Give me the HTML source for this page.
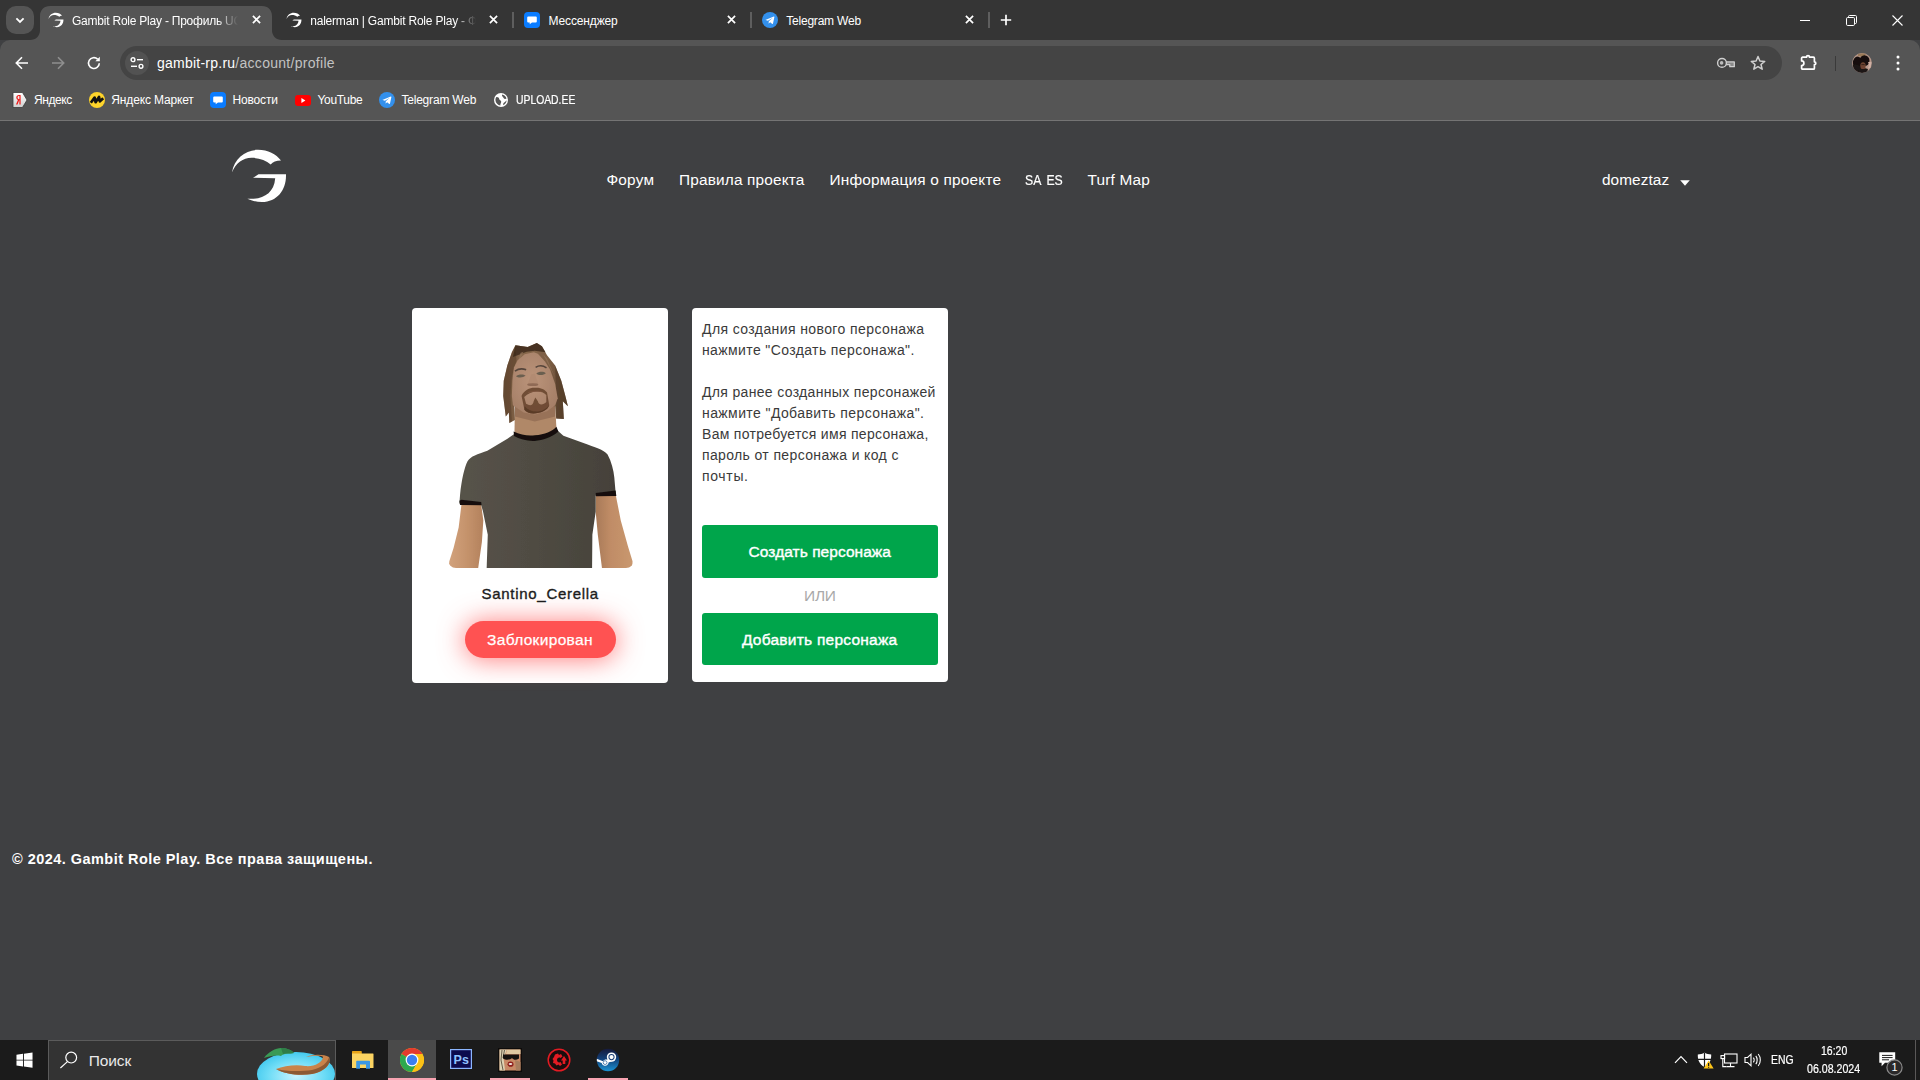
<!DOCTYPE html>
<html lang="ru"><head><meta charset="utf-8"><title>Gambit Role Play - Профиль UCP</title>
<style>
*{margin:0;padding:0;box-sizing:border-box}
html,body{width:1920px;height:1080px;overflow:hidden;background:#3f4042}
body{position:relative;font-family:"Liberation Sans",sans-serif;color:#fff}
.abs{position:absolute;display:block}
.t{position:absolute;white-space:nowrap;line-height:1;display:block}
#frame{position:absolute;left:0;top:0;width:1920px;height:40px;background:#353535}
#tabsearch{position:absolute;left:6px;top:6px;width:28px;height:28px;border-radius:10px;background:#555555}
#acttab{position:absolute;left:30px;top:6px}
#toolbar{position:absolute;left:0;top:40px;width:1920px;height:80px;background:#555555;border-radius:10px 10px 0 0}
#bmline{position:absolute;left:0;top:120px;width:1920px;height:1px;background:#747474}
#omni{position:absolute;left:120px;top:46px;width:1662px;height:34px;border-radius:17px;background:#444444}
#chip{position:absolute;left:125px;top:51px;width:24px;height:24px;border-radius:12px;background:#525252}
.tabtitle{position:absolute;top:12px;height:18px;overflow:hidden;white-space:nowrap;font-size:12px;line-height:18px;-webkit-mask-image:linear-gradient(to right,#000 0,#000 145px,transparent 166px);mask-image:linear-gradient(to right,#000 0,#000 145px,transparent 166px)}
.tsep{position:absolute;top:12px;width:1.5px;height:16px;background:#5e5e5e}
#page{position:absolute;left:0;top:121px;width:1920px;height:919px;background:#3f4042}
#card1{position:absolute;left:412px;top:308px;width:256px;height:375px;border-radius:4px;background:#fff}
#card2{position:absolute;left:692px;top:308px;width:256px;height:374px;border-radius:4px;background:#fff}
#btn-red{position:absolute;left:465px;top:621px;width:151px;height:37px;border-radius:19px;background:#ff5252;box-shadow:0 1px 26px 1px rgba(255,82,82,.72)}
.gbtn{position:absolute;left:702px;width:236px;border-radius:3px;background:#00a54b}
#taskbar{position:absolute;left:0;top:1040px;width:1920px;height:40px;background:#1b1b1b}
#search{position:absolute;left:48px;top:1040px;width:288px;height:40px;background:#333333;border:1px solid #5b5b5b;border-bottom:none}
</style></head>
<body>
<!-- ===== Browser chrome ===== -->
<div id="frame"></div>
<div id="tabsearch"><svg width="28" height="28" viewBox="0 0 28 28"><path d="M10.4 12.3 L14 15.9 L17.6 12.3" fill="none" stroke="#fff" stroke-width="1.8"/></svg></div>
<svg id="acttab" width="252" height="34" viewBox="0 0 252 34"><path d="M0 34 C6 34 10 30 10 24 L10 10 C10 4 14 0 20 0 L232 0 C238 0 242 4 242 10 L242 24 C242 30 246 34 252 34 Z" fill="#555555"/></svg>
<div id="toolbar"></div>
<!-- favicons in tabs -->
<svg class="abs" style="left:48px;top:12px" width="16" height="16" viewBox="230 148 58 56"><path d="M232 172 C234 158 246 150 258 150 C268 150 276 154 281 160.5 C276 160.5 273 162 270.7 164.6 C266 160 259 158 251.5 158 C243 158 236 163 232 172 Z M253 177.8 L258.5 174.3 L286 174.3 C286.5 190 277 202 262 202 C256 202 251 200.5 247.4 198.7 C262 200 274 194 275.2 178.3 Z" fill="#fff"/></svg>
<svg class="abs" style="left:286px;top:12px" width="16" height="16" viewBox="230 148 58 56"><path d="M232 172 C234 158 246 150 258 150 C268 150 276 154 281 160.5 C276 160.5 273 162 270.7 164.6 C266 160 259 158 251.5 158 C243 158 236 163 232 172 Z M253 177.8 L258.5 174.3 L286 174.3 C286.5 190 277 202 262 202 C256 202 251 200.5 247.4 198.7 C262 200 274 194 275.2 178.3 Z" fill="#fff"/></svg>
<svg class="abs" style="left:524px;top:12px" width="16" height="16" viewBox="0 0 16 16"><rect width="16" height="16" rx="4" fill="#0a7cff"/><path d="M4.2 4.5 h7.6 a1 1 0 0 1 1 1 v4 a1 1 0 0 1 -1 1 H8 l-2.3 1.7 v-1.7 H4.2 a1 1 0 0 1 -1 -1 v-4 a1 1 0 0 1 1 -1z" fill="#fff"/></svg>
<svg class="abs" style="left:762px;top:12px" width="16" height="16" viewBox="0 0 16 16"><circle cx="8" cy="8" r="8" fill="#3390ec"/><path d="M3.3 7.9 L11.8 4.5 C12.2 4.4 12.5 4.6 12.4 5.1 L11 11.6 C10.9 12 10.6 12.1 10.3 11.9 L8.1 10.3 L7 11.3 C6.9 11.4 6.8 11.5 6.6 11.5 L6.8 9.3 L10.8 5.7 L5.9 8.8 L3.7 8.1 C3.3 8 3.2 8 3.3 7.9Z" fill="#fff"/></svg>
<!-- tab titles with fade -->
<div class="tabtitle" style="left:72px;width:172px"><span style="letter-spacing:-0.225px">Gambit Role Play - Профиль UCP</span></div>
<div class="tabtitle" style="left:310.2px;width:172px"><span style="letter-spacing:-0.200px">nalerman | Gambit Role Play - Форум</span></div>
<!-- tab close buttons -->
<svg class="abs x" style="left:251.5px;top:15.2px" width="9" height="9" viewBox="0 0 9 9"><path d="M0.9 0.9 L8.1 8.1 M8.1 0.9 L0.9 8.1" stroke="#fff" stroke-width="1.7"/></svg>
<svg class="abs x" style="left:489.3px;top:15.2px" width="9" height="9" viewBox="0 0 9 9"><path d="M0.9 0.9 L8.1 8.1 M8.1 0.9 L0.9 8.1" stroke="#fff" stroke-width="1.7"/></svg>
<svg class="abs x" style="left:727.4px;top:15.2px" width="9" height="9" viewBox="0 0 9 9"><path d="M0.9 0.9 L8.1 8.1 M8.1 0.9 L0.9 8.1" stroke="#fff" stroke-width="1.7"/></svg>
<svg class="abs x" style="left:965.4px;top:15.2px" width="9" height="9" viewBox="0 0 9 9"><path d="M0.9 0.9 L8.1 8.1 M8.1 0.9 L0.9 8.1" stroke="#fff" stroke-width="1.7"/></svg>
<!-- tab separators -->
<div class="tsep" style="left:512px"></div><div class="tsep" style="left:750px"></div><div class="tsep" style="left:988px"></div>
<!-- new tab plus -->
<svg class="abs" style="left:1000px;top:14px" width="12" height="12" viewBox="0 0 12 12"><path d="M6 0.8 V11.2 M0.8 6 H11.2" stroke="#fff" stroke-width="1.7"/></svg>
<!-- window controls -->
<svg class="abs" style="left:1800px;top:20px" width="10" height="1"><rect width="10" height="1" fill="#fff"/></svg>
<svg class="abs" style="left:1846px;top:15px" width="11" height="11" viewBox="0 0 11 11"><path d="M2.5 2.5 V1.6 a1.1 1.1 0 0 1 1.1 -1.1 H9.4 a1.1 1.1 0 0 1 1.1 1.1 V7.4 a1.1 1.1 0 0 1 -1.1 1.1 H8.5" fill="none" stroke="#fff" stroke-width="1"/><rect x="0.5" y="2.5" width="8" height="8" rx="1.2" fill="none" stroke="#fff" stroke-width="1"/></svg>
<svg class="abs" style="left:1892px;top:15px" width="11" height="11" viewBox="0 0 11 11"><path d="M0.5 0.5 L10.5 10.5 M10.5 0.5 L0.5 10.5" stroke="#fff" stroke-width="1.1"/></svg>
<!-- nav buttons -->
<svg class="abs" style="left:15px;top:56px" width="14" height="14" viewBox="0 0 14 14"><path d="M13 7 H1.8 M7 1.3 L1.3 7 L7 12.7" fill="none" stroke="#fff" stroke-width="1.6"/></svg>
<svg class="abs" style="left:51px;top:56px" width="14" height="14" viewBox="0 0 14 14"><path d="M1 7 H12.2 M7 1.3 L12.7 7 L7 12.7" fill="none" stroke="#8f8f8f" stroke-width="1.6"/></svg>
<svg class="abs" style="left:87px;top:56px" width="14" height="14" viewBox="0 0 14 14"><path d="M12.3 7.2 A5.4 5.4 0 1 1 10.6 3.1" fill="none" stroke="#fff" stroke-width="1.6"/><path d="M12.8 0.8 V5.2 H8.4 Z" fill="#fff"/></svg>
<!-- omnibox -->
<div id="omni"></div>
<div id="chip"><svg width="24" height="24" viewBox="0 0 24 24"><g fill="none" stroke="#fff" stroke-width="1.4"><circle cx="8" cy="8.7" r="1.9"/><path d="M12 8.7 H18"/><circle cx="16" cy="15.3" r="1.9"/><path d="M6 15.3 H12"/></g></svg></div>
<!-- key, star -->
<svg class="abs" style="left:1716px;top:56px" width="20" height="14" viewBox="0 0 20 14"><path d="M10 5.9 H18.3 V10.7 H13.8 V8.7 H10" fill="#8a8a8a" stroke="#cfcfcf" stroke-width="1.3" stroke-linejoin="round"/><circle cx="6" cy="6.9" r="4.4" fill="#444" stroke="#cfcfcf" stroke-width="1.4"/><circle cx="5.6" cy="6.9" r="1.8" fill="#bdbdbd"/></svg>
<svg class="abs" style="left:1750px;top:55px" width="16" height="16" viewBox="0 0 16 16"><path d="M8 1.5 L9.9 6 L14.7 6.4 L11 9.5 L12.2 14.2 L8 11.7 L3.8 14.2 L5 9.5 L1.3 6.4 L6.1 6 Z" fill="none" stroke="#d0d0d0" stroke-width="1.5" stroke-linejoin="round"/></svg>
<!-- extensions -->
<svg class="abs" style="left:1800px;top:54px" width="18" height="17" viewBox="0 0 18 17"><path d="M1.6 4.2 a1 1 0 0 1 1 -1 H6.5 a1.5 1.5 0 0 1 3 0 H13.4 a1 1 0 0 1 1 1 V7.8 a1.4 1.4 0 0 1 0 2.8 V14.2 a1 1 0 0 1 -1 1 H2.6 a1 1 0 0 1 -1 -1 V11.5 a2.3 2.3 0 0 0 0 -4.6 Z" fill="none" stroke="#fff" stroke-width="1.7" stroke-linejoin="round"/></svg>
<div class="abs" style="left:1834.5px;top:55.5px;width:1.5px;height:15px;background:#3a3a3a"></div>
<!-- avatar -->
<svg class="abs" style="left:1852px;top:53px" width="20" height="20" viewBox="0 0 20 20"><defs><clipPath id="avc"><circle cx="10" cy="10" r="9.9"/></clipPath><filter id="avb"><feGaussianBlur stdDeviation="0.5"/></filter></defs><g clip-path="url(#avc)"><rect width="20" height="20" fill="#b7978a"/><g filter="url(#avb)"><path d="M6 1 C9 0 12 0 14 1 L12 4 L6 3 Z" fill="#9a7a58"/><ellipse cx="5.5" cy="10" rx="4.6" ry="6.4" fill="#15100e"/><ellipse cx="12.5" cy="7.6" rx="5" ry="5.4" fill="#17110f"/><path d="M1 12 C4 10 8 12 9 14 L16 16 L14 21 L2 21 Z" fill="#1a1412"/><ellipse cx="11" cy="12.8" rx="2.7" ry="3.6" fill="#6e4230"/><path d="M9.4 11.6 H12.6" stroke="#2a1a14" stroke-width=".8"/><path d="M7 17 C9 15.5 13 15.5 15.5 17.5 L15 21 H6 Z" fill="#1c1513"/><path d="M16 9 C17.5 11 17 14 15.5 15.5 L18.5 15 L19.5 9 Z" fill="#cfb0a4"/></g></g></svg>
<svg class="abs" style="left:1896px;top:55px" width="4" height="16" viewBox="0 0 4 16"><circle cx="2" cy="2" r="1.5" fill="#fff"/><circle cx="2" cy="8" r="1.5" fill="#fff"/><circle cx="2" cy="14" r="1.5" fill="#fff"/></svg>
<!-- bookmark icons -->
<svg class="abs" style="left:12px;top:92px" width="16" height="16" viewBox="0 0 16 16"><defs><linearGradient id="yg" x1="0" y1="0" x2="0" y2="1"><stop offset="0" stop-color="#fff"/><stop offset="1" stop-color="#cfcfcf"/></linearGradient></defs><path d="M1 0.5 H10.5 L15 8 L10.5 15.5 H1 Z" fill="url(#yg)" stroke="#3b3b3b" stroke-width=".8"/><path d="M8.6 3 H7 C5.4 3 4.3 4 4.3 5.6 C4.3 6.8 4.9 7.6 5.9 8 L4 12.6 H5.5 L7.2 8.3 H7.4 V12.6 H8.6 Z M7.4 7.2 H7.1 C6.2 7.2 5.6 6.7 5.6 5.6 C5.6 4.6 6.2 4.1 7 4.1 H7.4 Z" fill="#f01818"/></svg>
<svg class="abs" style="left:89px;top:92px" width="16" height="16" viewBox="0 0 16 16"><circle cx="8" cy="8" r="8" fill="#fed42b"/><path d="M1.8 10.8 L5.6 5.6 L6.6 10.2 L10 5 L10.9 9.4 L14.2 6.2" fill="none" stroke="#111" stroke-width="2.7" stroke-linejoin="round"/></svg>
<svg class="abs" style="left:210px;top:92px" width="16" height="16" viewBox="0 0 16 16"><rect width="16" height="16" rx="4" fill="#0a7cff"/><path d="M4.2 4.5 h7.6 a1 1 0 0 1 1 1 v4 a1 1 0 0 1 -1 1 H8 l-2.3 1.7 v-1.7 H4.2 a1 1 0 0 1 -1 -1 v-4 a1 1 0 0 1 1 -1z" fill="#fff"/></svg>
<svg class="abs" style="left:295px;top:94.5px" width="16" height="11" viewBox="0 0 16 11"><rect width="16" height="11" rx="3" fill="#ff0000"/><path d="M6.4 3 L10.4 5.5 L6.4 8 Z" fill="#fff"/></svg>
<svg class="abs" style="left:379px;top:92px" width="16" height="16" viewBox="0 0 16 16"><circle cx="8" cy="8" r="8" fill="#3390ec"/><path d="M3.3 7.9 L11.8 4.5 C12.2 4.4 12.5 4.6 12.4 5.1 L11 11.6 C10.9 12 10.6 12.1 10.3 11.9 L8.1 10.3 L7 11.3 C6.9 11.4 6.8 11.5 6.6 11.5 L6.8 9.3 L10.8 5.7 L5.9 8.8 L3.7 8.1 C3.3 8 3.2 8 3.3 7.9Z" fill="#fff"/></svg>
<svg class="abs" style="left:494px;top:93px" width="14" height="14" viewBox="0 0 14 14"><circle cx="7" cy="7" r="7" fill="#fff"/><path d="M2.2 4.2 C3.6 3.8 5 4.6 5.2 6 C5.4 7.4 7 7.2 7.2 8.6 C7.4 10 6 11 6.4 12.6 C4 12.2 1.6 10.2 1.4 7 C1.4 6 1.7 5 2.2 4.2 Z M8 1.4 C10 1.6 12 3.2 12.5 5.6 C11.6 6.4 10 6.2 9.6 5 C9.2 3.8 7.6 3.4 8 1.4 Z M12.6 7.6 C12.4 9.6 11.2 11.4 9.4 12.2 C8.8 11 9.4 9.6 10.6 9.2 C11.6 8.9 11.8 7.9 12.6 7.6 Z" fill="#555"/></svg>
<div id="bmline"></div>
<!-- ===== Page ===== -->
<div id="page"></div>
<svg class="abs" style="left:230px;top:148px" width="58" height="56" viewBox="230 148 58 56"><path d="M232 172.4 C234 158 246 149.8 258 149.8 C268 149.8 276 154 281 160.5 C276 160.5 273 162 270.7 164.6 C266 160 259 157.8 251.5 157.8 C243 157.8 236 163 232 172.4 Z M253 177.8 L258.5 174.3 L286 174.3 C286.5 190 277 202 262 202 C256 202 251 200.5 247.4 198.7 C262 200 274 194 275.2 178.3 Z" fill="#fff"/></svg>
<svg class="abs" style="left:1679.5px;top:179.5px" width="10" height="6" viewBox="0 0 10 6"><path d="M0.2 0.3 H9.8 L5 5.8 Z" fill="#fff"/></svg>
<div id="card1"></div>
<div id="card2"></div>
<div id="btn-red"></div>
<div class="gbtn" style="top:525px;height:53px"></div>
<div class="gbtn" style="top:613px;height:52px"></div>
<!-- character -->
<svg class="abs" id="char" style="left:440px;top:330px" width="200" height="238" viewBox="440 330 200 238">
<defs>
<clipPath id="imgclip"><path d="M440 330 H634 V560 a8 8 0 0 1 -8 8 H456 a8 8 0 0 1 -8 -8 V330 Z"/></clipPath>
<linearGradient id="shirtg" x1="0" y1="0" x2="1" y2="0"><stop offset="0" stop-color="#57534a"/><stop offset=".45" stop-color="#504c43"/><stop offset="1" stop-color="#45413a"/></linearGradient>
<linearGradient id="armL" x1="0" y1="0" x2="1" y2="0"><stop offset="0" stop-color="#d2a27c"/><stop offset=".55" stop-color="#c4926b"/><stop offset="1" stop-color="#b3815d"/></linearGradient>
<linearGradient id="armR" x1="0" y1="0" x2="1" y2="0"><stop offset="0" stop-color="#a87a58"/><stop offset=".4" stop-color="#c08c66"/><stop offset="1" stop-color="#c9986f"/></linearGradient>
<linearGradient id="hairg" x1="0" y1="0" x2="1" y2="0"><stop offset="0" stop-color="#6e523a"/><stop offset=".3" stop-color="#86674b"/><stop offset=".7" stop-color="#7c5e44"/><stop offset="1" stop-color="#5e4631"/></linearGradient>
<radialGradient id="faceg" cx=".45" cy=".45" r=".6"><stop offset="0" stop-color="#bb947a"/><stop offset="1" stop-color="#a68068"/></radialGradient>
<filter id="soft"><feGaussianBlur stdDeviation="0.6"/></filter>
</defs>
<g clip-path="url(#imgclip)" filter="url(#soft)">
 <!-- body: coords in zoom2 space -->
 <g transform="translate(440,420) scale(0.14347)">
  <path d="M150 585 L287 590 L302 700 L292 850 L265 1040 L60 1040 L65 985 L95 890 L130 750 Z" fill="url(#armL)"/>
  <path d="M1085 525 L1226 528 L1260 700 L1310 880 L1342 985 L1340 1040 L1130 1040 L1100 800 L1085 640 Z" fill="url(#armR)"/>
  <path d="M515 100 L470 130 L330 215 C260 240 215 252 192 288 C170 330 150 420 140 520 L135 582 L287 592 L300 640 L333 800 L325 1040 L1060 1040 L1062 800 L1085 640 L1085 528 L1226 530 L1215 400 C1210 350 1195 290 1168 240 C1140 205 1080 190 1000 160 L860 110 L815 70 L660 140 Z" fill="url(#shirtg)"/>
  <path d="M135 562 L150 556 L287 572 L290 594 L140 592 Z" fill="#14100e"/>
  <path d="M1085 508 L1224 492 L1229 530 L1088 532 Z" fill="#14100e"/>
 </g>
 <!-- head: coords in zoom1 space -->
 <g transform="translate(490,335) scale(0.10183)">
  <path d="M245 700 L640 690 L655 960 L440 1010 L240 975 Z" fill="#b08868"/>
  <path d="M245 700 L640 690 L640 800 L440 850 L245 800 Z" fill="#987258"/>
  <path d="M250 100 L370 118 L460 78 L510 110 L560 200 L640 300 L700 450 L740 600 L765 700 L715 650 L725 825 L650 820 L640 700 L240 700 L245 835 L190 865 L185 760 L155 800 L130 600 L135 450 L170 300 L215 170 Z" fill="url(#hairg)"/>
  <path d="M250 100 L215 170 L170 300 L135 450 L130 600 L155 800 L185 760 L190 865 L215 850 L200 600 L215 400 L260 250 Z" fill="#5a4029" opacity=".55"/>
  <path d="M640 300 L700 450 L740 600 L765 700 L715 650 L725 825 L650 820 L650 600 Z" fill="#4f3825" opacity=".6"/>
  <path d="M250 100 L370 118 L460 78 L510 110 L545 170 L440 155 L360 165 L225 215 Z" fill="#3d2a1b" opacity=".85"/>
  <path d="M300 175 L330 165 L250 330 L225 420 Z M520 190 L560 230 L640 420 L600 340 Z" fill="#94755a" opacity=".7"/>
  <path d="M430 170 L340 190 L270 250 L235 320 L220 450 L215 600 L225 690 L330 760 L440 780 L560 750 L640 690 L665 620 L640 480 L590 340 L540 260 L470 185 Z" fill="url(#faceg)"/>
  <path d="M310 600 C330 540 400 515 440 518 C500 512 545 540 560 565 L582 690 C560 770 380 800 338 735 Z M336 610 L354 676 C395 700 420 695 430 648 L445 614 L470 650 C480 696 525 686 553 658 L553 588 C505 538 395 543 336 610 Z" fill="#6a4830" fill-rule="evenodd" opacity=".92"/>
  <path d="M340 700 C400 770 520 770 580 690 C560 770 380 800 338 735 Z" fill="#5a3b27"/>
  <path d="M245 355 C280 330 320 328 355 342" stroke="#54443a" stroke-width="15" fill="none"/>
  <path d="M448 318 C480 298 520 298 555 322" stroke="#54443a" stroke-width="15" fill="none"/>
  <path d="M255 405 C275 385 325 380 350 398 C330 418 280 425 255 405 Z" fill="#6a5e50"/>
  <path d="M455 380 C475 358 525 355 548 375 C530 395 480 400 455 380 Z" fill="#6a5e50"/>
  <path d="M370 480 C390 500 450 500 475 478 L440 380 L405 385 Z" fill="#b08a70" opacity=".8"/>
  <ellipse cx="420" cy="488" rx="55" ry="14" fill="#8f6a54"/>
  <path d="M372 566 C420 550 470 548 505 556" stroke="#7f553f" stroke-width="9" fill="none"/>
  <path d="M232 948 C300 985 380 992 440 985 C540 975 610 945 652 900 L672 948 C600 1010 520 1035 440 1040 C370 1044 290 1025 236 992 Z" fill="#14100e"/>
 </g>
</g>
</svg>
<!-- ===== Taskbar ===== -->
<div id="taskbar"></div>
<svg class="abs" style="left:15.5px;top:1051.5px" width="17" height="16.5" viewBox="0 0 18 18" preserveAspectRatio="none"><path d="M0.5 3 L7.4 2 V8.4 H0.5 Z M8.4 1.9 L17.5 0.6 V8.4 H8.4 Z M0.5 9.4 H7.4 V15.8 L0.5 14.8 Z M8.4 9.4 H17.5 V17.2 L8.4 15.9 Z" fill="#fff"/></svg>
<div id="search"></div>
<svg class="abs" style="left:58px;top:1050px" width="22" height="20" viewBox="0 0 22 20"><circle cx="13.2" cy="7.6" r="5.4" fill="none" stroke="#fff" stroke-width="1.2"/><path d="M9.4 11.6 L2.4 18" stroke="#fff" stroke-width="1.2"/></svg>
<!-- island -->
<svg class="abs" style="left:255px;top:1041px" width="81" height="39" viewBox="255 1041 81 39"><defs><radialGradient id="sea" cx=".5" cy=".55" r=".6"><stop offset="0" stop-color="#c9f4ff"/><stop offset=".6" stop-color="#6ddcf6"/><stop offset="1" stop-color="#38c4ec"/></radialGradient></defs>
<ellipse cx="296" cy="1074" rx="39" ry="22" fill="url(#sea)"/>
<path d="M264 1058 C268 1052 276 1048 281 1048 C286 1048 292 1050 294 1053 C288 1054 284 1053 281 1056 C276 1055 270 1056 264 1058 Z" fill="#3a9a55"/>
<path d="M281 1048 C286 1048 292 1050 294 1053 C290 1054 286 1053 283 1054 Z" fill="#2f7d48"/>
<path d="M276 1069 C284 1066 296 1064 305 1066 C314 1067 322 1063 323 1057 C321 1055 314 1056 306 1057 C312 1054 324 1054 329 1057 C332 1064 324 1072 312 1074 C300 1076 284 1074 276 1069 Z" fill="#c9834a"/>
<path d="M276 1069 C284 1071 300 1072 312 1070 C322 1068 328 1062 329 1057 C332 1064 324 1072 312 1074 C300 1076 284 1074 276 1069 Z" fill="#8c5a34"/>
</svg>
<!-- explorer -->
<svg class="abs" style="left:351px;top:1049px" width="24" height="21" viewBox="0 0 24 21"><path d="M1 2.6 a.6 .6 0 0 1 .6 -.6 H10 a.8 .8 0 0 1 .8 .8 V5 H1 Z" fill="#e8a317"/><path d="M1 4.6 H22 a.5 .5 0 0 1 .5 .5 V18.5 a.5 .5 0 0 1 -.5 .5 H1.5 a.5 .5 0 0 1 -.5 -.5 Z" fill="#fcd462"/><path d="M5.2 12.6 a.8 .8 0 0 1 .8 -.8 H18.2 a.8 .8 0 0 1 .8 .8 V19.8 H15 V15.4 H9 V19.8 H5.2 Z" fill="#3b97e3"/></svg>
<!-- chrome tile -->
<div class="abs" style="left:388px;top:1040px;width:48px;height:40px;background:#4a4a4a"></div>
<svg class="abs" style="left:400px;top:1047.5px" width="24" height="24" viewBox="0 0 24 24"><circle cx="12" cy="12" r="12" fill="#fbc116"/><path d="M12 12 L1.6 6 A12 12 0 0 1 22.4 6 Z" fill="#e33b2e"/><path d="M12 12 L1.6 6 A12 12 0 0 0 12 24 L17.5 14.5 Z" fill="#2da94f"/><path d="M12 6 H22.4 A12 12 0 0 1 12 24 L17.2 15 Z" fill="#fbc116"/><circle cx="12" cy="12" r="6.4" fill="#fff"/><circle cx="12" cy="12" r="5.2" fill="#3b7ff0"/></svg>
<!-- photoshop -->
<svg class="abs" style="left:450px;top:1049px" width="22" height="20" viewBox="0 0 22 20"><rect x=".6" y=".6" width="20.8" height="18.8" fill="#0c0b4e" stroke="#8cb6ff" stroke-width="1.2"/><text x="3.6" y="14.6" font-family="Liberation Sans, sans-serif" font-weight="700" font-size="12.5" fill="#8fc2ff">Ps</text></svg>
<!-- gta icon -->
<svg class="abs" style="left:498px;top:1048px" width="24" height="24" viewBox="0 0 24 24"><rect width="24" height="24" fill="#0d0b0a"/><rect x="1.5" y="1.5" width="21" height="21" fill="#c98a66"/><path d="M1.5 1.5 H9 L5.5 10 L7 22.5 H1.5 Z" fill="#ddd3b4"/><path d="M4 2 L3 12 L5 22 M6.5 2 L5 10" stroke="#4a4030" stroke-width=".8" fill="none"/><path d="M9 1.5 H22.5 V6 H8 Z" fill="#e0c8a0"/><path d="M5 6.5 H21 V10.5 C18 12.5 15.5 12 14 10 C12 12 8 12.5 5 10.5 Z" fill="#15120f"/><ellipse cx="12.5" cy="16.2" rx="3" ry="2.6" fill="#8e1f1c"/><ellipse cx="12.5" cy="16" rx="1.8" ry="1.1" fill="#f0e6e0"/><path d="M17 12 L22.5 14 V22.5 H18 Z" fill="#a97e5e"/></svg>
<!-- red gear -->
<svg class="abs" style="left:547px;top:1048px" width="24" height="24" viewBox="0 0 24 24"><circle cx="12" cy="12" r="10.8" fill="#1b0d0d" stroke="#e31b23" stroke-width="1.5"/><path d="M8 6.5 L11 5.5 L12 7 L14 6 L15.5 8.5 L13.5 10 C12 9 10 10 10 12 C10 14 12 15 13.5 14 L15 16.5 L13 18 L11.5 16.5 L9.5 17.5 L8 15.5 L6 15 L6.5 12.5 L5.5 11 L7 9 Z" fill="#e31b23"/><path d="M14 12.5 L17 8 L20 12.5 H18.3 V16 H15.7 V12.5 Z" fill="#e31b23"/></svg>
<!-- steam -->
<svg class="abs" style="left:596px;top:1048px" width="24" height="24" viewBox="0 0 24 24"><defs><linearGradient id="stg" x1="0" y1="0" x2="0" y2="1"><stop offset="0" stop-color="#161a3c"/><stop offset=".45" stop-color="#123f77"/><stop offset="1" stop-color="#1b93d4"/></linearGradient><clipPath id="stc"><circle cx="12" cy="12" r="11.2"/></clipPath></defs><circle cx="12" cy="12" r="11.2" fill="url(#stg)"/><g clip-path="url(#stc)"><path d="M0 10.6 L7 13.2 C8 11.6 10 11 11.4 11.8 L13 8.4 L18 12.4 L12.6 14.6 C12.4 17 10 18.4 7.8 17.4 C6.6 16.9 5.9 16 5.7 15 L0 12.9 Z" fill="#fff"/><circle cx="15.5" cy="9.1" r="4.7" fill="#fff"/><circle cx="15.5" cy="9.1" r="3.1" fill="#1b3f77"/><circle cx="15.5" cy="9.1" r="2.1" fill="#fff"/><circle cx="9.1" cy="14.6" r="1.9" fill="none" stroke="#1b5a9a" stroke-width=".7"/></g></svg>
<!-- underlines -->
<div class="abs" style="left:388px;top:1078px;width:48px;height:2px;background:#f8a3b1"></div>
<div class="abs" style="left:490px;top:1078px;width:40px;height:2px;background:#f8a3b1"></div>
<div class="abs" style="left:588px;top:1078px;width:40px;height:2px;background:#f8a3b1"></div>
<!-- tray -->
<svg class="abs" style="left:1674px;top:1055px" width="14" height="9" viewBox="0 0 14 9"><path d="M1 7.8 L7 1.6 L13 7.8" fill="none" stroke="#fff" stroke-width="1.2"/></svg>
<svg class="abs" style="left:1697px;top:1052px" width="17" height="17" viewBox="0 0 17 17"><path d="M7.5 0.6 C9.5 2 11.8 2.5 14.2 2.5 C14.4 8 12.6 12.4 7.5 15 C2.4 12.4 0.6 8 0.8 2.5 C3.2 2.5 5.5 2 7.5 0.6 Z" fill="#fff"/><path d="M7.5 0.6 V15 M0.8 7.4 H14.2" stroke="#1b1b1b" stroke-width="1.2"/><path d="M11.6 8.6 L16.6 16.6 H6.6 Z" fill="#fcc419"/><path d="M11.6 11 V14 M11.6 14.8 V15.8" stroke="#1b1b1b" stroke-width="1.2"/></svg>
<svg class="abs" style="left:1720px;top:1053px" width="18" height="15" viewBox="0 0 18 15"><g fill="none" stroke="#fff" stroke-width="1.1"><rect x="4.5" y="1" width="12.5" height="9"/><path d="M10.5 10 V13.4 M6.5 13.6 H14.5"/><rect x="1" y="2.6" width="3.6" height="3" /><path d="M2.8 5.6 V13.6 H6.5"/></g></svg>
<svg class="abs" style="left:1744px;top:1052px" width="18" height="16" viewBox="0 0 18 16"><g fill="none" stroke="#fff" stroke-width="1.1"><path d="M1 5.5 H3.6 L7 2.2 V13.8 L3.6 10.5 H1 Z"/><path d="M9.4 5.6 C10.4 6.8 10.4 9.2 9.4 10.4"/><path d="M11.8 3.8 C13.6 6 13.6 10 11.8 12.2"/><path d="M14.2 2 C17 5.2 17 10.8 14.2 14"/></g></svg>
<svg class="abs" style="left:1879px;top:1052px" width="17" height="15" viewBox="0 0 17 15"><path d="M0.3 0.3 H16.2 V10.8 H6 L2.6 14.2 V10.8 H0.3 Z" fill="#fff"/><path d="M3 3.4 H13.6 M3 5.6 H13.6 M3 7.8 H10" stroke="#1b1b1b" stroke-width="1"/></svg>
<svg class="abs" style="left:1886px;top:1059px" width="17" height="17" viewBox="0 0 17 17"><circle cx="8.5" cy="8.5" r="7.6" fill="#2a2829" stroke="#8a8a8a" stroke-width="1.2"/><text x="5.6" y="12.4" font-family="Liberation Sans, sans-serif" font-size="11" fill="#fff">1</text></svg>
<div class="abs" style="left:1915px;top:1040px;width:1px;height:40px;background:#5a5858"></div>
<!-- ===== Text ===== -->
<span class="t" style="left:548.5px;top:15px;font-size:12px;color:#fff;letter-spacing:-0.132px;">Мессенджер</span>
<span class="t" style="left:786.2px;top:15px;font-size:12px;color:#fff;letter-spacing:-0.205px;">Telegram Web</span>
<span class="t" style="left:157.0px;top:56px;font-size:14px;color:#fff;letter-spacing:0.239px;">gambit-rp.ru</span>
<span class="t" style="left:235.3px;top:56px;font-size:14px;color:#c2c2c2;letter-spacing:0.290px;">/account/profile</span>
<span class="t" style="left:34.0px;top:94px;font-size:12px;color:#fff;letter-spacing:-0.432px;">Яндекс</span>
<span class="t" style="left:111.3px;top:94px;font-size:12px;color:#fff;letter-spacing:-0.152px;">Яндекс Маркет</span>
<span class="t" style="left:232.5px;top:94px;font-size:12px;color:#fff;letter-spacing:-0.159px;">Новости</span>
<span class="t" style="left:317.5px;top:94px;font-size:12px;color:#fff;letter-spacing:-0.326px;">YouTube</span>
<span class="t" style="left:401.4px;top:94px;font-size:12px;color:#fff;letter-spacing:-0.196px;">Telegram Web</span>
<span class="t" style="left:515.5px;top:94px;font-size:12px;color:#fff;transform:scaleX(0.8631);transform-origin:0 0;-webkit-text-stroke:0.2px #fff;">UPLOAD.EE</span>
<span class="t" style="left:606.4px;top:172px;font-size:15.4px;color:#fff;letter-spacing:0.209px;">Форум</span>
<span class="t" style="left:679.0px;top:172px;font-size:15.4px;color:#fff;letter-spacing:0.161px;">Правила проекта</span>
<span class="t" style="left:829.5px;top:172px;font-size:15.4px;color:#fff;letter-spacing:0.205px;">Информация о проекте</span>
<span class="t" style="left:1025.3px;top:172px;font-size:15.4px;color:#fff;transform:scaleX(0.7958);transform-origin:0 0;-webkit-text-stroke:0.2px #fff;word-spacing:3px;">SA ES</span>
<span class="t" style="left:1087.5px;top:172px;font-size:15.4px;color:#fff;letter-spacing:0.183px;">Turf Map</span>
<span class="t" style="left:1601.9px;top:172px;font-size:15.4px;color:#fff;letter-spacing:0.081px;">domeztaz</span>
<span class="t" style="left:481.6px;top:586px;font-size:15px;color:#1c1c1c;letter-spacing:0.696px;-webkit-text-stroke:0.35px #1c1c1c;">Santino_Cerella</span>
<span class="t" style="left:487.0px;top:632px;font-size:15.5px;color:#fff;letter-spacing:0.324px;-webkit-text-stroke:0.25px #fff;">Заблокирован</span>
<span class="t" style="left:702.0px;top:322px;font-size:14px;color:#3a3a3a;letter-spacing:0.399px;">Для создания нового персонажа</span>
<span class="t" style="left:702.0px;top:343px;font-size:14px;color:#3a3a3a;letter-spacing:0.383px;">нажмите "Создать персонажа".</span>
<span class="t" style="left:702.0px;top:385px;font-size:14px;color:#3a3a3a;letter-spacing:0.333px;">Для ранее созданных персонажей</span>
<span class="t" style="left:702.0px;top:406px;font-size:14px;color:#3a3a3a;letter-spacing:0.406px;">нажмите "Добавить персонажа".</span>
<span class="t" style="left:702.0px;top:427px;font-size:14px;color:#3a3a3a;letter-spacing:0.296px;">Вам потребуется имя персонажа,</span>
<span class="t" style="left:702.0px;top:448px;font-size:14px;color:#3a3a3a;letter-spacing:0.363px;">пароль от персонажа и код с</span>
<span class="t" style="left:702.0px;top:469px;font-size:14px;color:#3a3a3a;letter-spacing:0.656px;">почты.</span>
<span class="t" style="left:748.6px;top:544px;font-size:15.5px;color:#fff;letter-spacing:0.046px;-webkit-text-stroke:0.4px #fff;">Создать персонажа</span>
<span class="t" style="left:804.0px;top:588px;font-size:15.5px;color:#a9a9a9;letter-spacing:-0.227px;">ИЛИ</span>
<span class="t" style="left:741.9px;top:632px;font-size:15.5px;color:#fff;letter-spacing:0.244px;-webkit-text-stroke:0.4px #fff;">Добавить персонажа</span>
<span class="t" style="left:12.0px;top:852px;font-size:14.5px;color:#fff;font-weight:700;letter-spacing:0.464px;">© 2024. Gambit Role Play. Все права защищены.</span>
<span class="t" style="left:88.8px;top:1053px;font-size:15.5px;color:#e9e9e9;letter-spacing:-0.138px;">Поиск</span>
<span class="t" style="left:1771.3px;top:1054px;font-size:12px;color:#fff;transform:scaleX(0.8687);transform-origin:0 0;-webkit-text-stroke:0.2px #fff;">ENG</span>
<span class="t" style="left:1820.8px;top:1045px;font-size:12px;color:#fff;transform:scaleX(0.8724);transform-origin:0 0;-webkit-text-stroke:0.2px #fff;">16:20</span>
<span class="t" style="left:1807.4px;top:1063px;font-size:12px;color:#fff;transform:scaleX(0.8841);transform-origin:0 0;-webkit-text-stroke:0.2px #fff;">06.08.2024</span>
</body></html>
